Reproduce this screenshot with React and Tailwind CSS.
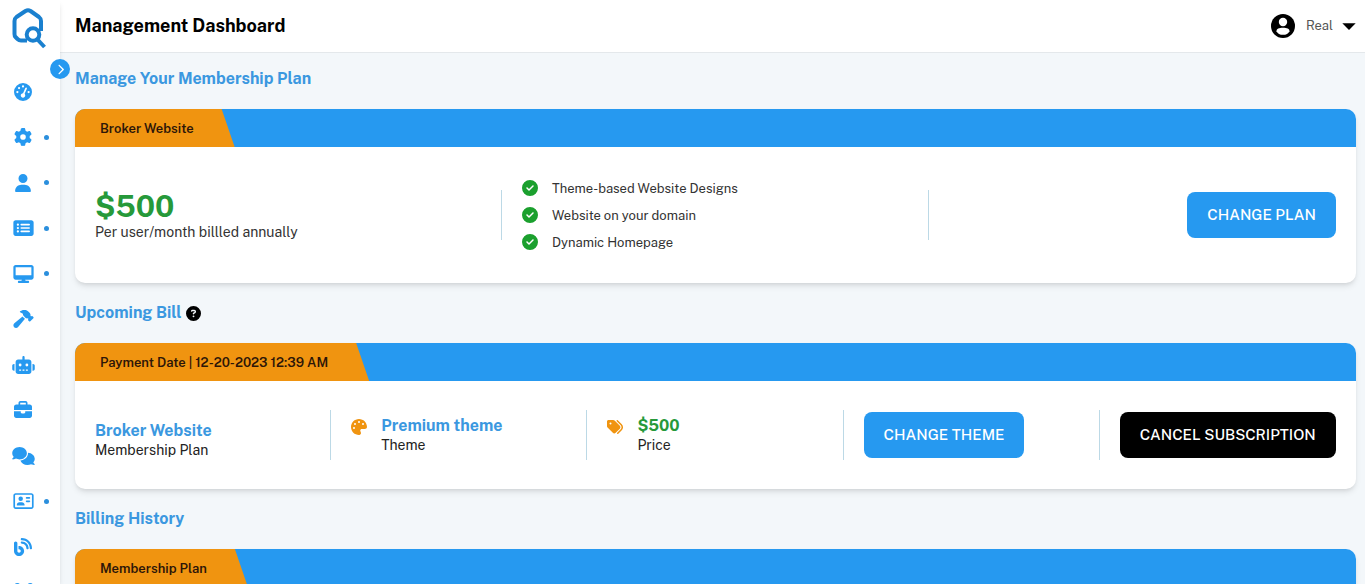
import { FaGaugeHigh, FaGear, FaUser, FaRectangleList, FaDesktop, FaHammer, FaRobot, FaBriefcase, FaComments, FaRegAddressCard, FaBlog, FaUsers, FaCircleCheck, FaCircleQuestion, FaPalette, FaTags, FaChevronRight } from 'react-icons/fa6'
import { MdArrowDropDown } from 'react-icons/md'

// the glyphs share one height but not one width
const menu = [
    { label: 'Dashboard', icon: FaGaugeHigh, width: 'w-[18px]' },
    { label: 'Settings', icon: FaGear, width: 'w-[18px]', hasChildren: true },
    { label: 'Profile', icon: FaUser, width: 'w-[16px]', hasChildren: true },
    { label: 'Listings', icon: FaRectangleList, width: 'w-[21px]', hasChildren: true },
    { label: 'Website', icon: FaDesktop, width: 'w-[21px]', hasChildren: true },
    { label: 'Tools', icon: FaHammer, width: 'w-[21px]' },
    { label: 'Assistant', icon: FaRobot, width: 'w-[23px]' },
    { label: 'Business', icon: FaBriefcase, width: 'w-[18px]' },
    { label: 'Messages', icon: FaComments, width: 'w-[23px]' },
    { label: 'Contacts', icon: FaRegAddressCard, width: 'w-[21px]', hasChildren: true },
    { label: 'Blog', icon: FaBlog, width: 'w-[18px]' },
    { label: 'Users', icon: FaUsers, width: 'w-[23px]' },
]

const features = ['Theme-based Website Designs', 'Website on your domain', 'Dynamic Homepage']

const Logo = () => (
    <svg viewBox="0 0 36 42" className="w-9 h-[42px]" fill="none" stroke="#1a80cf" strokeWidth="4" strokeLinejoin="round">
        <path d="M17 33.5 H11 Q9 33.5 7.5 32 L5.5 30 Q4.5 29 4.5 27 V14 Q4.5 11.500 6.500 10 L15.500 4 Q18 2.500 20.500 4 L29 10 Q31 11.500 31 14 V24" />
        <circle cx="23" cy="27.500" r="6.300" />
        <path d="M27.500 32.500 L34.500 40" />
    </svg>
)

const Avatar = () => (
    <svg viewBox="0 0 24 24" className="size-6 mr-[11px]">
        <circle cx="12" cy="12" r="12" fill="#000" />
        <circle cx="12" cy="8" r="4.200" fill="#fff" />
        <path d="M5.500 17.200 C5.500 14.700 8 13.800 12 13.800 S18.500 14.700 18.500 17.200 C17.500 19.700 15 20.800 12 20.800 S6.500 19.700 5.500 17.200Z" fill="#fff" />
    </svg>
)

const Sidebar = () => (
    <aside className="relative z-10 w-15 shrink-0 bg-white shadow-md">
        <a href="#" aria-label="Home" className="block pl-[10px] pt-[7px] h-[69px]">
            <Logo />
        </a>
        <button aria-label="Expand menu" className="absolute top-[59px] -right-[10px] size-5 rounded-full bg-[#2699f0] text-white flex items-center justify-center">
            <FaChevronRight size={11} />
        </button>
        <nav>
            <ul>
                {menu.map((item) => <MenuItem key={item.label} item={item}/>)}
            </ul>
        </nav>
    </aside>
)

const MenuItem = ({ item }) => {
    const Icon = item.icon

    return (
        <li>
            <a href="#" aria-label={item.label} className="flex items-center text-[13px] leading-normal py-[13px] pl-[11px] text-[#2699f0]">
                <span className="w-6 h-[1lh] flex items-center justify-center">
                    <Icon className={`h-[18px] shrink-0 ${item.width}`}/>
                </span>
                {item.hasChildren && <span className="ml-[9px] size-[5px] rounded-full bg-[#2b8fdd]"/>}
            </a>
        </li>
    )
}

const Header = () => (
    <header className="flex items-center justify-between h-[53px] pl-[15px] pb-px bg-white border-b border-[#e4e8eb]">
        <h1 className="text-lg font-bold text-black">Management Dashboard</h1>
        <button className="flex items-center text-[13px] text-[#555]">
            <Avatar />
            Real
            <MdArrowDropDown size={32} className="text-black"/>
        </button>
    </header>
)

const SectionTitle = ({ children }) => (
    <h2 className="flex items-center gap-1 text-base leading-6 font-bold text-[#3b98e0] mb-[18px]">{children}</h2>
)

const Card = ({ label, children }) => (
    <div className="rounded-[10px] overflow-hidden bg-white shadow-md mb-[18px]">
        <div className="bg-[#2699f0]">
            <div className="w-fit pt-px pl-[25px] pr-[41px] leading-[37px] text-[13px] font-semibold text-[#2d1608] bg-[#f09410] [clip-path:polygon(0_0,calc(100%-13px)_0,100%_100%,0_100%)]">
                {label}
            </div>
        </div>
        {children}
    </div>
)

const Column = ({ last, children }) => (
    <div className={last ? 'flex items-center h-[50px] pl-5' : 'flex items-center h-[50px] pl-5 border-r border-[#bcd9e6]'}>
        {children}
    </div>
)

const Detail = ({ title, text, green }) => (
    <div>
        <p className={green ? 'text-base leading-5 font-bold text-[#26993a]' : 'text-base leading-5 font-bold text-[#3b98e0]'}>{title}</p>
        <p className="text-sm leading-[18px] text-[#222]">{text}</p>
    </div>
)

const Button = ({ dark, children }) => (
    <button className={dark ? 'h-[46px] px-5 rounded-lg text-[15px] font-medium whitespace-nowrap text-white bg-black' : 'h-[46px] px-5 rounded-lg text-[15px] font-medium whitespace-nowrap text-white bg-[#2699f0]'}>
        {children}
    </button>
)

const MembershipPlan = () => (
    <Card label="Broker Website">
        <div className="grid grid-cols-3 items-center h-[136px]">
            <Column>
                <div>
                    <p className="text-[30px] leading-[34px] font-bold text-[#26993a]">$500</p>
                    <p className="text-sm leading-[18px] text-[#333]">Per user/month billled annually</p>
                </div>
            </Column>
            <Column>
                <ul className="text-[13px] leading-[27px] text-[#333]">
                    {features.map((feature) => (
                        <li key={feature} className="flex items-center gap-[14px]">
                            <FaCircleCheck size={16} className="text-[#1ba02e]"/>
                            {feature}
                        </li>
                    ))}
                </ul>
            </Column>
            <Column last>
                <div className="ml-auto pr-5">
                    <Button>CHANGE PLAN</Button>
                </div>
            </Column>
        </div>
    </Card>
)

const UpcomingBill = () => (
    <Card label="Payment Date | 12-20-2023 12:39 AM">
        <div className="grid grid-cols-5 items-center h-[108px]">
            <Column>
                <div className="pt-[10px]">
                    <Detail title="Broker Website" text="Membership Plan"/>
                </div>
            </Column>
            <Column>
                <FaPalette size={16} className="mr-[14px] mb-4 text-[#f09410]"/>
                <Detail title="Premium theme" text="Theme"/>
            </Column>
            <Column>
                <FaTags size={16} className="mr-[14px] mb-4 text-[#f09410]"/>
                <Detail title="$500" text="Price" green/>
            </Column>
            <Column>
                <Button>CHANGE THEME</Button>
            </Column>
            <Column last>
                <Button dark>CANCEL SUBSCRIPTION</Button>
            </Column>
        </div>
    </Card>
)

export default function App() {
    return (
        <div className="flex h-screen overflow-hidden bg-[#f3f7fa] font-['Public_Sans',Inter,sans-serif]">
            <Sidebar />
            <div className="flex-1 min-w-0">
                <Header />
                <main className="pl-[15px] pr-[9px] pt-[14px]">
                    <SectionTitle>Manage Your Membership Plan</SectionTitle>
                    <MembershipPlan />
                    <SectionTitle>Upcoming Bill <FaCircleQuestion size={15} className="text-black"/></SectionTitle>
                    <UpcomingBill />
                    <SectionTitle>Billing History</SectionTitle>
                    <Card label="Membership Plan">
                        <div className="h-[108px]"/>
                    </Card>
                </main>
            </div>
        </div>
    )
}
